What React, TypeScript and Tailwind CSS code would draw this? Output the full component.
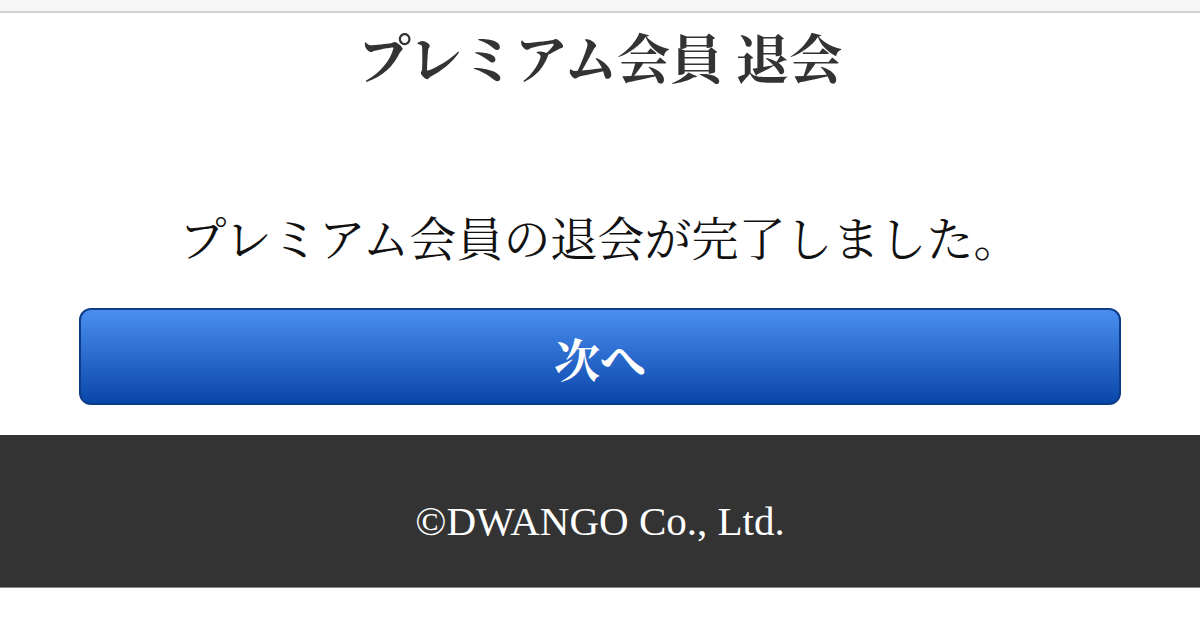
import React from "react";

const jp = { fontFamily: '"Noto Serif CJK JP", "Liberation Serif", "Noto Sans CJK JP", serif' };

export default function App() {
  return (
    <div className="w-[1200px] h-[633px] bg-white flex flex-col overflow-hidden" style={jp}>
      <div className="h-[13px] bg-[#f7f7f7] border-b-2 border-[#d2d2d2] shrink-0" />
      <h1 className="mt-[17px] text-center text-[53px] leading-[53px] font-bold text-[#333333]">
        プレミアム会員 退会
      </h1>
      <p className="mt-[129px] text-center text-[47px] leading-[47px] text-[#111111]">
        プレミアム会員の退会が完了しました。
      </p>
      <div className="mt-[49px] px-[79px]">
        <button className="w-full h-[97px] rounded-[12px] border-2 border-[#0b3d8a] bg-gradient-to-b from-[#4a8ff0] to-[#0846aa] text-white text-[46px] leading-[46px] font-bold flex items-center justify-center">
          次へ
        </button>
      </div>
      <footer className="mt-[30px] h-[153px] bg-[#333333] border-b border-[#8a8a8a] flex items-center justify-center pt-[20px] shrink-0">
        <span
          className="text-white text-[41px] leading-[41px]"
          style={{ fontFamily: '"Liberation Serif", serif' }}
        >
          ©DWANGO Co., Ltd.
        </span>
      </footer>
    </div>
  );
}
